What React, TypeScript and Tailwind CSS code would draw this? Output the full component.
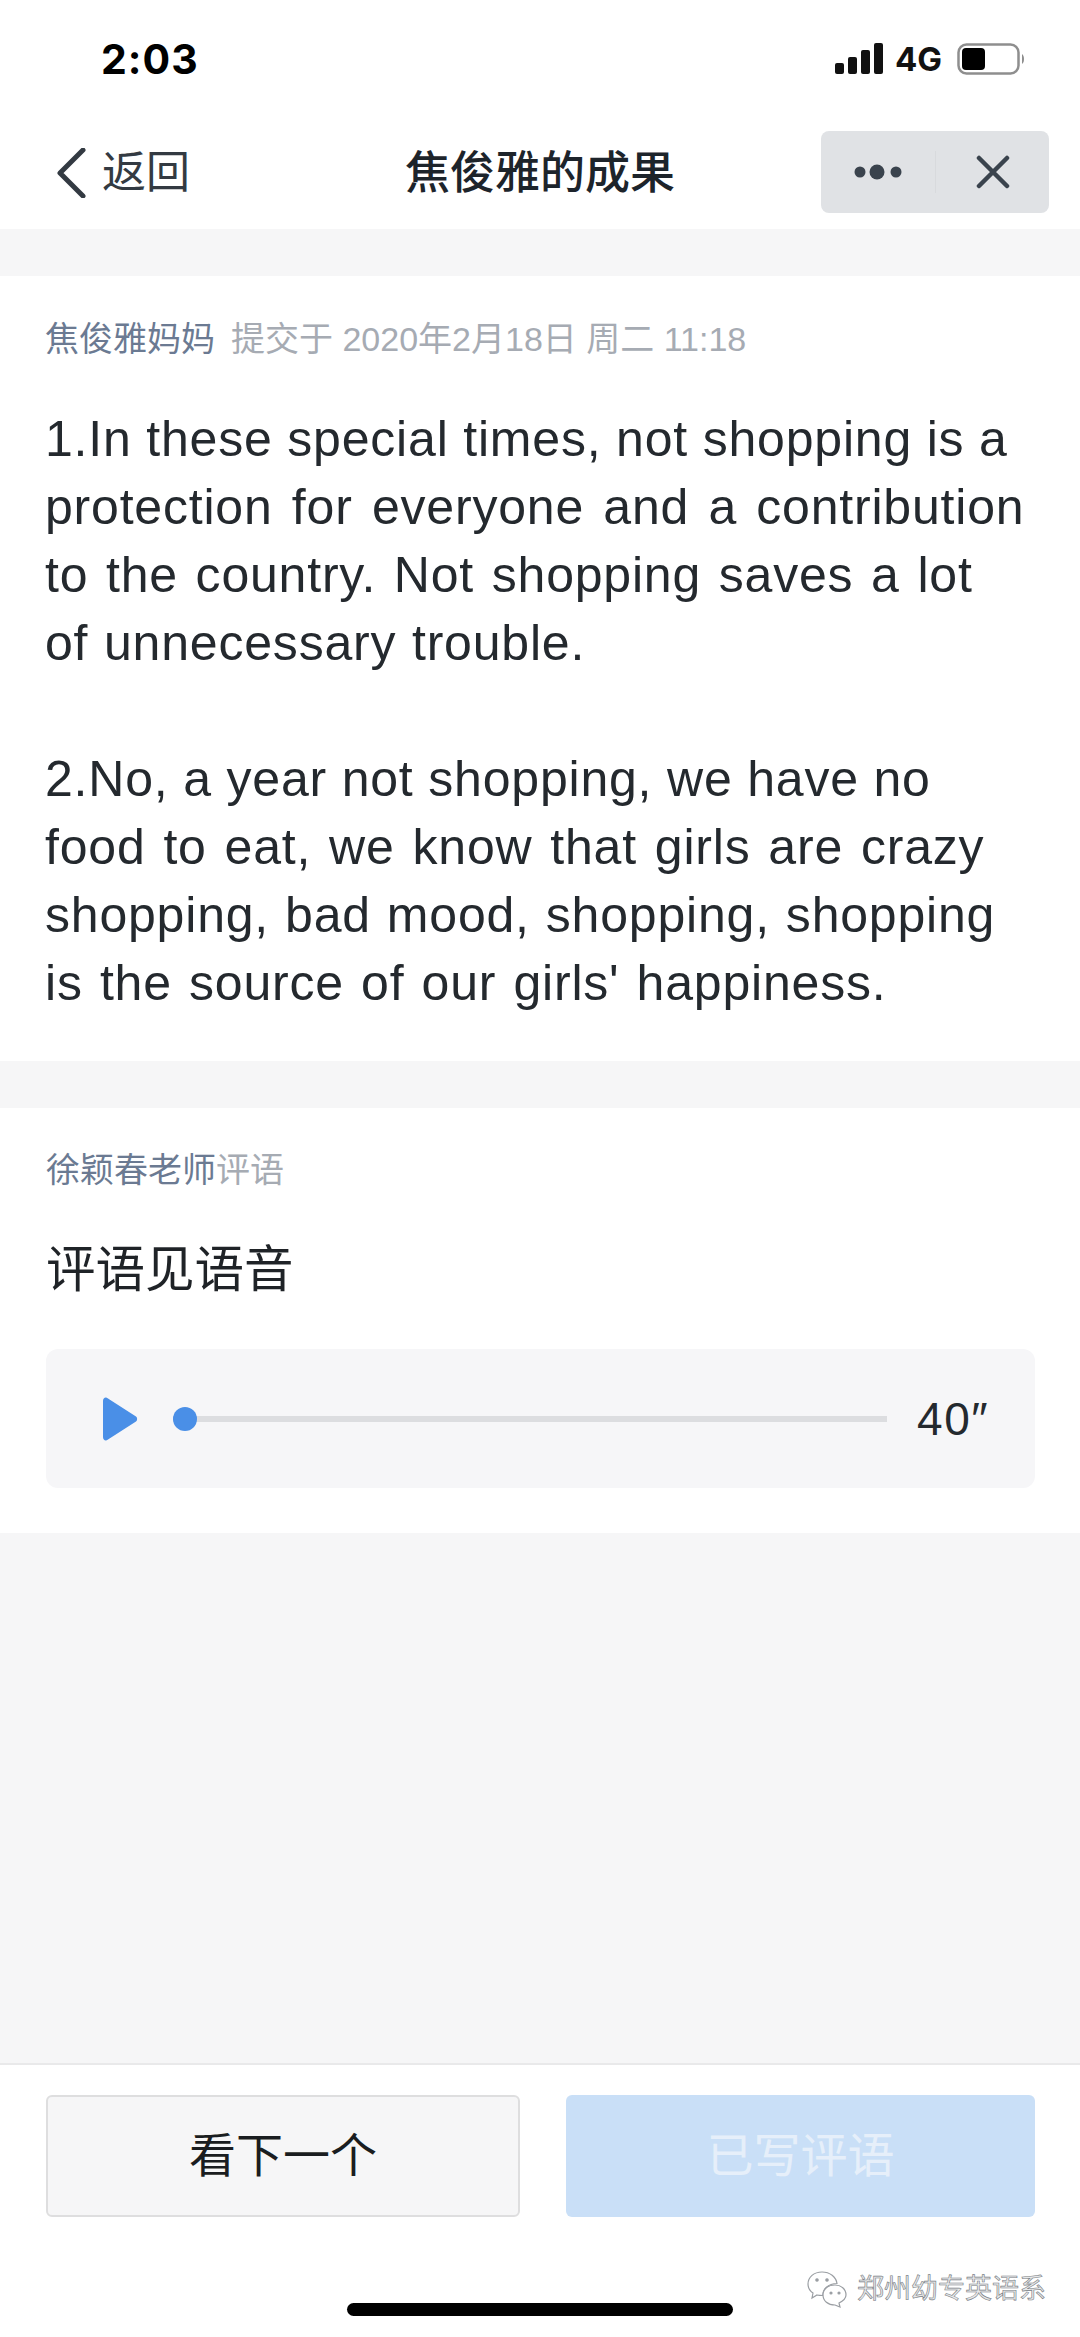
const cjk = "font-['Liberation_Sans','Noto_Sans_CJK_SC',sans-serif]";

const answerLines = [
  { text: '1.In these special times, not shopping is a', spacing: '' },
  { text: 'protection for everyone and a contribution', spacing: '[word-spacing:4.6px]' },
  { text: 'to the country. Not shopping saves a lot', spacing: '[word-spacing:3px]' },
  { text: 'of unnecessary trouble.', spacing: '[word-spacing:1px]' },
  { text: '', spacing: 'h-[68px]' },
  { text: '2.No, a year not shopping, we have no', spacing: '' },
  { text: 'food to eat, we know that girls are crazy', spacing: '[word-spacing:3.2px]' },
  { text: 'shopping, bad mood, shopping, shopping', spacing: '[word-spacing:1.3px]' },
  { text: "is the source of our girls' happiness.", spacing: '[word-spacing:2.5px]' },
];

function StatusBar() {
  return (
    <div className="flex h-[115px] items-center justify-between pl-[101px] pr-[56px] pt-[3px] font-['Inter',sans-serif]">
      <span className="text-[41px] font-bold leading-none tracking-[1px] text-black">2:03</span>
      <div className="flex items-center">
        <svg width="50" height="32" viewBox="0 0 50 32" fill="#111">
          <rect x="0" y="20" width="9" height="11" rx="2" />
          <rect x="13" y="14" width="9" height="17" rx="2" />
          <rect x="26" y="7" width="9" height="24" rx="2" />
          <rect x="39" y="0" width="9" height="31" rx="2" />
        </svg>
        <span className="ml-[10px] text-[33px] font-bold leading-none text-[#111]">4G</span>
        <svg className="ml-[15px]" width="67" height="33" viewBox="0 0 67 33" fill="none">
          <rect x="1.500" y="1.500" width="60" height="29" rx="8" stroke="#8e8e8e" strokeWidth="2.500" />
          <rect x="5" y="5" width="23" height="22" rx="4" fill="#000" />
          <path d="M65 11c1.500 1 2 3 2 5s-.5 4-2 5z" fill="#8e8e8e" />
        </svg>
      </div>
    </div>
  );
}

function NavBar() {
  return (
    <div className="relative flex h-[114px] items-start justify-between pl-[56px] pr-[31px]">
      <div className="flex h-[116px] items-center">
        <svg width="30" height="50" viewBox="0 0 30 50" fill="none">
          <path d="M27 2 4 25l23 23" stroke="#333a42" strokeWidth="5" strokeLinecap="round" strokeLinejoin="round" />
        </svg>
        <span className="ml-[16px] text-[44px] leading-none text-[#333a42]">返回</span>
      </div>
      <div className="absolute left-[405px] top-[36px] text-[45px] font-medium leading-none text-[#1d242b]">焦俊雅的成果</div>
      <div className="mt-[16px] flex h-[82px] w-[228px] items-center rounded-[8px] bg-[#e0e2e5]">
        <div className="flex w-[114px] justify-center">
          <svg width="50" height="16" viewBox="0 0 50 16" fill="#3a434d">
            <circle cx="7" cy="8" r="5.500" />
            <circle cx="24" cy="8" r="7.500" />
            <circle cx="43" cy="8" r="5.500" />
          </svg>
        </div>
        <div className="h-[42px] w-px bg-[#d8dadd]" />
        <div className="flex flex-1 justify-center">
          <svg width="34" height="34" viewBox="0 0 34 34" fill="none">
            <path d="M3 3l28 28M31 3 3 31" stroke="#3a434d" strokeWidth="4.500" strokeLinecap="round" />
          </svg>
        </div>
      </div>
    </div>
  );
}

function Answer() {
  return (
    <div className="bg-white pb-[44px] pl-[45px] pr-[30px] pt-[42px]">
      <div className="flex text-[34px] leading-[42px]">
        <span className="text-[#6b7a92]">焦俊雅妈妈</span>
        <span className="ml-[16px] text-[#a6abb3]">提交于 2020年2月18日 周二 11:18</span>
      </div>
      <div className="mt-[45px] whitespace-nowrap text-[50px] leading-[68px] tracking-[0.8px] text-[#24292e]">
        {answerLines.map((line, i) => (
          <p key={i} className={line.spacing}>{line.text || <br />}</p>
        ))}
      </div>
    </div>
  );
}

function Comment() {
  return (
    <div className="bg-white pb-[45px] pl-[46px] pr-[45px] pt-[41px]">
      <div className="text-[34px] leading-[42px]">
        <span className="text-[#6b7a92]">徐颖春老师</span>
        <span className="text-[#a6abb3]">评语</span>
      </div>
      <div className="mt-[45px] text-[49.5px] leading-[68px] text-[#1f2327]">评语见语音</div>
      <div className="mt-[45px] flex h-[139px] items-center rounded-[12px] bg-[#f6f6f8] pl-[56px] pr-[46px]">
        <svg width="36" height="44" viewBox="0 0 36 44" fill="#4a8fe7">
          <path d="M1 4c0-3.500 3-4.500 5-2.500l28 18c1.500 1.200 1.500 3.800 0 5l-28 18C4 44.500 1 43.500 1 40z" />
        </svg>
        <div className="relative ml-[35px] flex h-[24px] flex-1 items-center">
          <div className="h-[6px] w-full bg-[#dcdde0]" />
          <div className="absolute left-0 top-0 h-[24px] w-[24px] rounded-full bg-[#4a8fe7]" />
        </div>
        <span className="ml-[30px] text-[46px] leading-none tracking-[1.5px] text-[#24292e]">40″</span>
      </div>
    </div>
  );
}

function Footer() {
  return (
    <div className="relative h-[274px] border-t-2 border-[#e9e9ea] bg-white pl-[46px] pr-[45px] pt-[30px]">
      <div className="flex justify-between">
        <div className="flex h-[122px] w-[474px] items-center justify-center rounded-[6px] border-2 border-[#dededf] bg-[#f6f6f7] text-[47px] text-[#1a1d20]">看下一个</div>
        <div className="flex h-[122px] w-[469px] items-center justify-center rounded-[6px] bg-[#c9dff7] text-[47px] text-[#e6effa]">已写评语</div>
      </div>
      <div className="absolute bottom-[21px] left-[347px] h-[13px] w-[386px] rounded-full bg-black" />
      <div className="absolute left-[806px] top-[205px] flex items-center">
        <svg width="44" height="38" viewBox="0 0 44 38" fill="white" stroke="#9a9ea3" strokeWidth="1.200">
          <path d="M16 2C8 2 2 7 2 14c0 4 2 7 5 9l-1 5 5-3c2 .5 4 .5 6 .5-.5-6 5-12 14-12C30 7 24 2 16 2z" />
          <path d="M29 15c-7 0-12 4-12 10s5 10 12 10l5 2-1-4c4-2 7-5 7-8 0-6-5-10-11-10z" />
          <circle cx="11" cy="10" r="1.200" fill="#9a9ea3" />
          <circle cx="21" cy="10" r="1.200" fill="#9a9ea3" />
          <circle cx="25" cy="23" r="1" fill="#9a9ea3" />
          <circle cx="33" cy="23" r="1" fill="#9a9ea3" />
        </svg>
        <span className="ml-[7px] text-[27px] leading-none text-[#e8e9ea] [-webkit-text-stroke:0.6px_#787d83]">郑州幼专英语系</span>
      </div>
    </div>
  );
}

export default function App() {
  return (
    <div className={`flex h-[2337px] w-[1080px] flex-col overflow-hidden bg-[#f6f6f7] ${cjk}`}>
      <div className="bg-white">
        <StatusBar />
        <NavBar />
      </div>
      <div className="h-[47px]" />
      <Answer />
      <div className="h-[47px]" />
      <Comment />
      <div className="flex-1" />
      <Footer />
    </div>
  );
}
